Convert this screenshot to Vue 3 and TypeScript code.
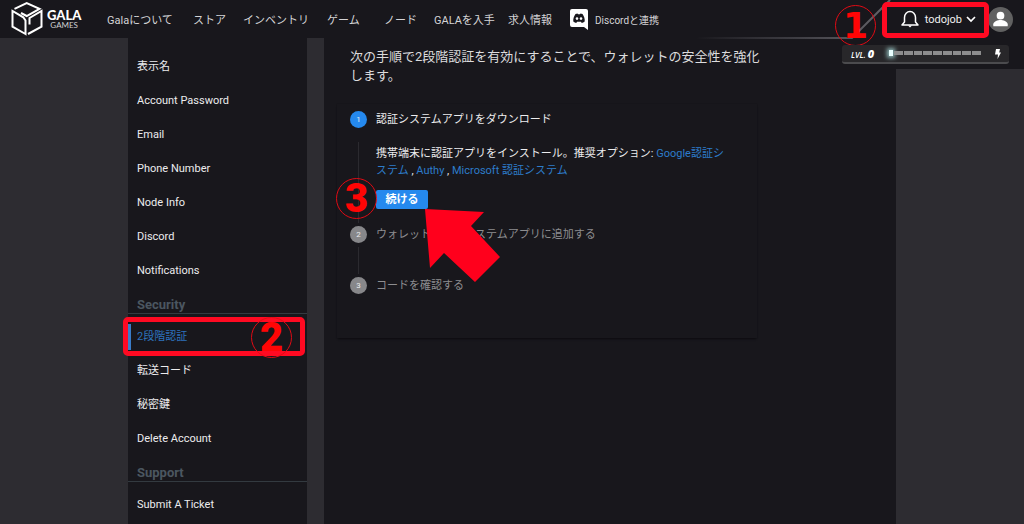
<script setup lang="ts">
interface NavItem { label: string; slot: string }
interface SideItem { label: string; active?: boolean }
interface SideGroup { title?: string; items: SideItem[] }

const nav: NavItem[] = [
  { label: 'Galaについて', slot: 'about' },
  { label: 'ストア', slot: 'store' },
  { label: 'インベントリ', slot: 'inventory' },
  { label: 'ゲーム', slot: 'games' },
  { label: 'ノード', slot: 'nodes' },
  { label: 'GALAを入手', slot: 'buy' },
  { label: '求人情報', slot: 'jobs' },
]

const groups: SideGroup[] = [
  {
    items: [
      { label: '表示名' },
      { label: 'Account Password' },
      { label: 'Email' },
      { label: 'Phone Number' },
      { label: 'Node Info' },
      { label: 'Discord' },
      { label: 'Notifications' },
    ],
  },
  {
    title: 'Security',
    items: [
      { label: '2段階認証', active: true },
      { label: '転送コード' },
      { label: '秘密鍵' },
      { label: 'Delete Account' },
    ],
  },
  { title: 'Support', items: [{ label: 'Submit A Ticket' }] },
]
</script>

<template>
  <div class="page">
    <header class="topbar">
      <a class="logo" href="#" aria-label="Gala Games">
        <svg class="cube" viewBox="0 0 32 34" aria-hidden="true">
          <path d="M14.500 32 1.500 24.700V9L12.300 15.300 14.500 18.500zM3.500 6.800 15.700 1.200 28.500 6.800 15.700 14 10 11M17 32 30.500 24.700V9L18.500 16v6.500" />
        </svg>
        <span class="wordmark"><b>GALA</b><small>GAMES</small></span>
      </a>
      <nav class="nav">
        <a v-for="n in nav" :key="n.slot" href="#" :class="n.slot">{{ n.label }}</a>
        <a class="discord" href="#">
          <svg viewBox="0 0 18 21" aria-hidden="true">
            <path fill="#fff" d="M2 0h14a2 2 0 0 1 2 2v19l-4-3H2a2 2 0 0 1-2-2V2a2 2 0 0 1 2-2z" />
            <path fill="#18171c" d="M5.500 5 7.500 4.500 8 5.200h2L10.500 4.500 12.500 5C14 7 15 10 14.700 12.500c-1 .9-2 1.200-3 1.400l-.7-1.200H7l-.7 1.200c-1-.2-2-.5-3-1.400C3 10 4 7 5.500 5z" />
            <circle cx="7" cy="9.600" r="1.300" fill="#fff" /><circle cx="11" cy="9.600" r="1.300" fill="#fff" />
          </svg>
          <span>Discordと連携</span>
        </a>
      </nav>
      <div class="tray">
        <svg class="trim" viewBox="0 0 200 40" aria-hidden="true">
          <defs>
            <linearGradient id="fade" x1="0" x2="1" y1="0" y2="0">
              <stop offset="0" stop-color="#45444a" stop-opacity="0" />
              <stop offset="0.500" stop-color="#3d3c42" />
              <stop offset="1" stop-color="#65646a" />
            </linearGradient>
          </defs>
          <path d="M0 38H156L194 0" fill="none" stroke="url(#fade)" stroke-width="2" />
        </svg>
        <div class="account">
          <button class="user" type="button">
            <svg class="bell" viewBox="0 0 18 18" aria-hidden="true">
              <path d="M1 15h16l-2.500-3V7.500C14.500 4 12 1.500 9 1.500S3.500 4 3.500 7.500V12L1 15z" fill="none" stroke="#fff" stroke-width="1.500" stroke-linejoin="round" />
              <path d="M7 15.500h4L9 17.500z" fill="#fff" />
            </svg>
            <span>todojob</span>
            <svg class="chev" viewBox="0 0 10 8" aria-hidden="true"><path d="M1 2 5 6 9 2" fill="none" stroke="#fff" stroke-width="1.700" /></svg>
          </button>
          <a class="avatar" href="#" aria-label="Profile">
            <svg viewBox="0 0 26 26" aria-hidden="true">
              <circle cx="13" cy="13" r="13" fill="#616161" />
              <circle cx="13" cy="9" r="4" fill="#fff" />
              <path d="M5.500 20v-2c0-3 5-4.500 7.500-4.500s7.500 1.500 7.500 4.500v2z" fill="#fff" />
            </svg>
          </a>
          <span class="frame frame-user"></span>
          <span class="mark mark-one">1</span>
        </div>
        <div class="level">
          <span class="lvl">LVL. <b>0</b></span>
          <span class="track"><i v-for="i in 10" :key="i"></i></span>
          <svg viewBox="0 0 6 10" aria-hidden="true"><path d="M1 0h4L4.200 3.500H6L2.500 10l.5-4.500H0z" fill="#fff" /></svg>
        </div>
      </div>
    </header>

    <div class="columns">
      <aside class="side">
        <section v-for="(g, gi) in groups" :key="gi">
          <h2 v-if="g.title">{{ g.title }}</h2>
          <ul>
            <li v-for="it in g.items" :key="it.label" :class="{ active: it.active }">
              <a href="#">{{ it.label }}</a>
              <template v-if="it.active">
                <span class="frame frame-item"></span>
                <span class="mark mark-two">2</span>
              </template>
            </li>
          </ul>
        </section>
      </aside>

      <main class="main">
        <p class="intro">次の手順で2段階認証を有効にすることで、ウォレットの安全性を強化します。</p>
        <ol class="steps">
          <li class="current">
            <span class="num">1</span>
            <h3>認証システムアプリをダウンロード</h3>
            <div class="body">
              <p>携帯端末に認証アプリをインストール。推奨オプション: <a href="#">Google認証システム</a> , <a href="#">Authy</a> , <a href="#">Microsoft 認証システム</a></p>
              <div class="action">
                <button class="go" type="button">続ける</button>
                <span class="mark mark-three">3</span>
                <svg class="arrow" viewBox="0 0 75 73" aria-hidden="true"><path d="M0 0 59 3 46 17 75 48 50 73 19 44 5 59z" fill="#ff001c" /></svg>
              </div>
            </div>
          </li>
          <li>
            <span class="num">2</span>
            <h3>ウォレットを認証システムアプリに追加する</h3>
            <div class="body"></div>
          </li>
          <li>
            <span class="num">3</span>
            <h3>コードを確認する</h3>
          </li>
        </ol>
      </main>
    </div>
  </div>
</template>

<style>
body { background: #2d2c31; }
</style>

<style scoped>
* { box-sizing: border-box; }
.page {
  min-height: 100vh;
  display: flex;
  flex-direction: column;
  background: #2d2c31;
  color: #dcdcde;
  font-family: Roboto, "Noto Sans CJK JP", sans-serif;
  font-size: 11px;
}
a { color: inherit; text-decoration: none; }
button { font-family: inherit; border: 0; padding: 0; cursor: pointer; }
ul, ol { list-style: none; margin: 0; padding: 0; }
h2, h3, p { margin: 0; }

.topbar {
  position: relative;
  z-index: 2;
  display: flex;
  align-items: center;
  height: 38px;
  padding-left: 11px;
  background: #18171c;
}
.logo { display: flex; align-items: center; gap: 4px; width: 96px; color: #fff; }
.cube { width: 32px; height: 34px; fill: none; stroke: #fff; stroke-width: 2; }
.wordmark { display: flex; flex-direction: column; align-items: center; font-family: Lato, sans-serif; }
.wordmark b { font-size: 13px; line-height: 12px; font-weight: 900; }
.wordmark small { font-size: 8px; line-height: 9px; color: #d0d0d2; }
.nav { display: flex; align-items: center; white-space: nowrap; color: #d4d4d6; }
.about { width: 86px; }
.store { width: 50px; }
.inventory { width: 84px; }
.games { width: 57px; }
.nodes { width: 50px; }
.buy { width: 74px; }
.jobs { width: 62px; }
.discord { display: flex; align-items: center; gap: 7px; font-size: 10px; }
.discord svg { width: 18px; height: 21px; }

.tray {
  position: absolute;
  top: 0;
  right: 0;
  width: 200px;
  height: 69px;
  padding-right: 15px;
  background: linear-gradient(#18171c, #18171c) right / 128px 100% no-repeat;
}
.trim { position: absolute; right: 128px; top: 0; width: 200px; height: 40px; }
.account { position: relative; display: flex; align-items: center; justify-content: flex-end; height: 38px; margin-right: -4px; }
.user { display: flex; align-items: center; gap: 4px; margin-right: 12px; background: none; color: #f1f1f1; font-size: 11px; }
.bell { width: 18px; height: 18px; margin-right: 2px; }
.chev { width: 10px; height: 8px; }
.avatar { width: 25px; height: 25px; }
.avatar svg { display: block; width: 25px; height: 25px; }
.level {
  position: relative;
  display: flex;
  align-items: center;
  width: 167px;
  height: 19px;
  margin: 7px 0 0 18px;
  padding: 0 8px 0 9px;
  border-radius: 3px;
  border-bottom: 2px solid #4b4b4e;
  background: #28272a;
  color: #fff;
}
.lvl { width: 38px; font-family: "Open Sans", sans-serif; font-style: italic; font-size: 8px; font-weight: 600; white-space: nowrap; }
.lvl b { font-size: 11px; }
.track { display: flex; gap: 1px; flex: 1; margin-right: 14px; }
.track i { flex: 1; height: 4px; background: #8d8d8e; }
.track i:first-child { flex: 0 0 4px; height: 6px; margin-top: -1px; background: #e9ffff; box-shadow: 0 0 4px 2px #8fb8b8; }
.level svg { width: 6px; height: 10px; }

.frame { position: absolute; border: 5px solid #ff0a22; border-radius: 5px; pointer-events: none; }
.frame-user { top: 2px; right: 24px; width: 107px; height: 36px; }
.frame-item { top: -2px; left: -5px; right: 2px; height: 39px; }
.mark {
  position: absolute;
  display: flex;
  align-items: center;
  justify-content: center;
  width: 41px;
  height: 41px;
  border: 1px solid #e00a14;
  border-radius: 50%;
  color: #ff0505;
  font-size: 40px;
  line-height: 40px;
  font-weight: 900;
  pointer-events: none;
}
.mark-one { top: 5px; right: 137px; font-family: "DejaVu Sans", sans-serif; font-size: 36px; font-weight: 700; }
.mark-two { top: -3px; right: 15px; }
.mark-three { top: -12px; left: -40px; }

.columns { flex: 1; display: grid; grid-template-columns: 179px 1fr; gap: 17px; padding: 0 12.5%; }
.side { padding-top: 12px; background: #18171c; color: #ececee; }
.side h2 {
  height: 26px;
  margin-bottom: 6px;
  padding: 8px 9px 0;
  border-bottom: 1px solid #333a40;
  color: #4b5660;
  font-size: 13px;
  line-height: 18px;
  font-weight: 700;
}
.side li { position: relative; }
.side li a { display: block; height: 34px; padding-left: 9px; line-height: 34px; }
.side .active a { color: #2d72bd; }
.side .active::before { content: ""; position: absolute; left: 0; top: 4px; width: 3px; height: 26px; background: #3a7cc8; }
.side .frame-item { top: -3px; }

.main { padding: 9px 13px; background: #18171c; }
.intro { max-width: 424px; padding-left: 13px; font-size: 13px; line-height: 19px; }
.steps { max-width: 420px; margin-top: 19px; padding: 7px 13px 44px; box-shadow: 0 2px 2px -1px #0c0b0f, 0 0 1px #121115; }
.steps li { position: relative; display: grid; grid-template-columns: 17px 1fr; column-gap: 9px; color: #8d8d90; }
.steps li:not(:last-child)::before { content: ""; position: absolute; left: 8px; top: 31px; bottom: 3px; width: 1px; background: #2b2a2f; }
.steps li:nth-child(2)::before { top: 21px; }
.num { align-self: center; width: 17px; height: 17px; border-radius: 50%; background: #87878a; color: #ececee; font-size: 8px; line-height: 17px; text-align: center; }
.current .num { background: #2589ee; }
.steps h3 { font-size: 11px; line-height: 17px; font-weight: 400; }
.steps .current { color: #ececee; }
.body { grid-column: 2; min-height: 34px; }
.current .body { padding: 17px 0; }
.current p { max-width: 354px; line-height: 17px; }
.current p a { color: #2d7cca; }
.action { position: relative; z-index: 1; display: flex; margin-top: 11px; }
.go { width: 52px; height: 19px; border-radius: 2px; background: #2589ee; color: #fff; font-size: 11px; line-height: 19px; font-weight: 700; }
.arrow { position: absolute; top: 19px; left: 49px; width: 75px; height: 73px; }
</style>
